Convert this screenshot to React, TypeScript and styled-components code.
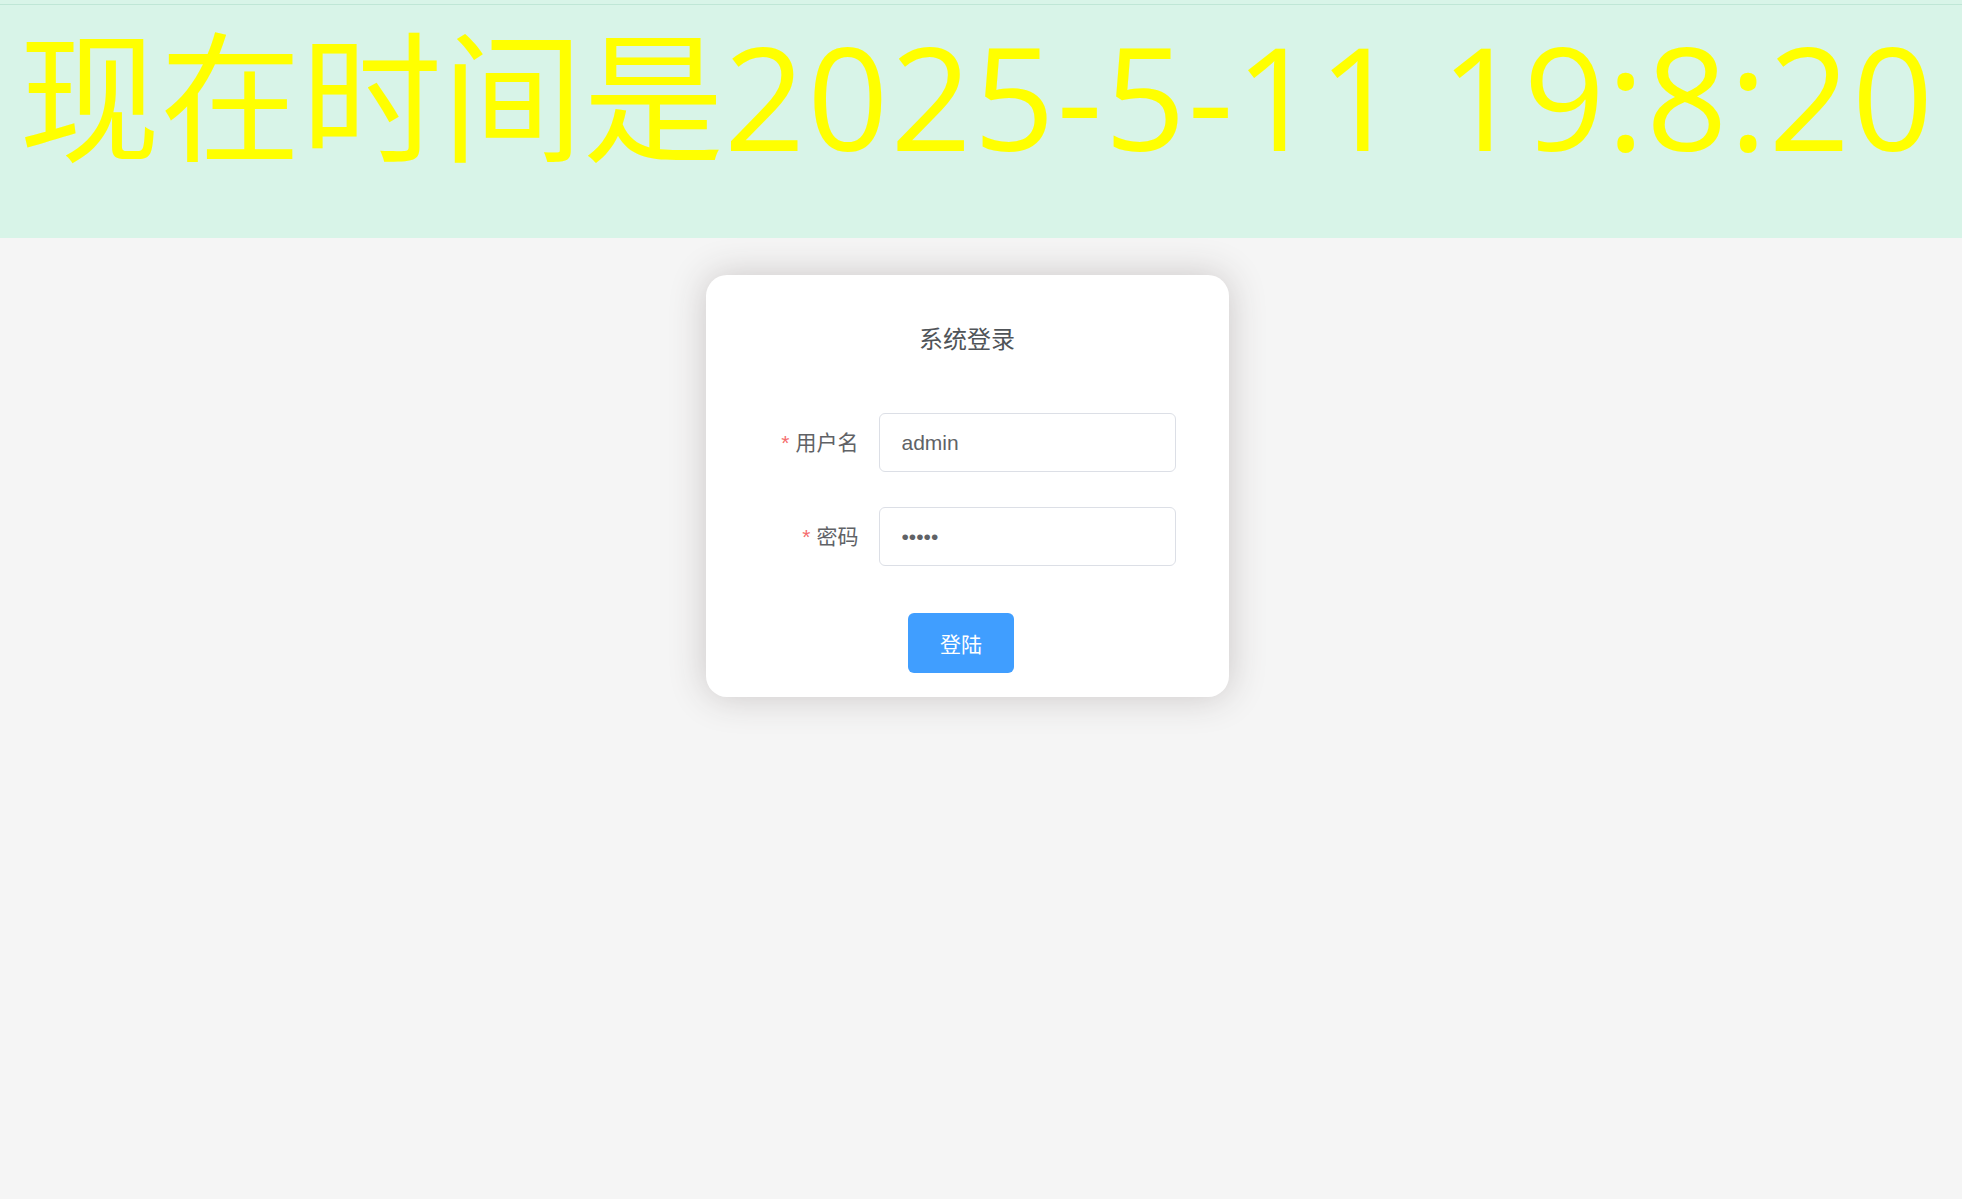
import React from 'react';
import styled, { createGlobalStyle } from 'styled-components';

const App = () => {
  return (
    <>
      <GlobalStyle />
      <Page>
        <Header>
          <TopRule />
          <Clock>
            现在时间是<ClockTime>2025-5-11 19:8:20</ClockTime>
          </Clock>
        </Header>

        <Main>
          <LoginCard>
            <Title>系统登录</Title>

            <FormRow>
              <Label>
                <Required>*</Required>用户名
              </Label>
              <Field type="text" defaultValue="admin" />
            </FormRow>

            <FormRow>
              <Label>
                <Required>*</Required>密码
              </Label>
              <Field type="password" defaultValue="12345" />
            </FormRow>

            <ButtonRow>
              <LoginButton type="button">登陆</LoginButton>
            </ButtonRow>
          </LoginCard>
        </Main>
      </Page>
    </>
  );
};
export default App;

// Style component
const GlobalStyle = createGlobalStyle`
  html, body {
    margin: 0;
    padding: 0;
    background-color: #f5f5f5;
  }

  body {
    font-family: "Liberation Sans", "Noto Sans CJK SC", sans-serif;
  }
`;

const Page = styled.div`
  width: 100%;
  min-height: 1199px;
  background-color: #f5f5f5;
`;

const Header = styled.div`
  height: 238px;
  box-sizing: border-box;
  padding-top: 4px;
  background-color: #d8f4e8;
`;

const TopRule = styled.div`
  height: 1px;
  background-color: #bfe6d6;
`;

const Clock = styled.div`
  padding-top: 2px;
  padding-left: 19px;

  font-family: "Noto Sans CJK SC", sans-serif;
  font-size: 141px;
  line-height: 166px;
  color: #ffff00;
  white-space: nowrap;
`;

const ClockTime = styled.span`
  font-family: "Open Sans", "Noto Sans CJK SC", sans-serif;
  font-size: 142px;
  letter-spacing: 2px;
`;

const Main = styled.div`
  display: flex;
  justify-content: center;

  padding-top: 37px;
  padding-right: 28px;
`;

const LoginCard = styled.div`
  width: 523px;
  box-sizing: border-box;

  padding: 47px 53px 24px 53px;

  background-color: #ffffff;
  border-radius: 21px;
  box-shadow: 0 0 37px #cac6c6;
`;

const Title = styled.h3`
  margin: 0 0 55px 0;

  font-size: 24px;
  line-height: 36px;
  font-weight: normal;
  text-align: center;
  color: #505458;
`;

const FormRow = styled.div`
  display: flex;
  align-items: center;

  margin-bottom: 35px;
`;

const Label = styled.label`
  width: 120px;
  flex-shrink: 0;
  box-sizing: border-box;

  padding-right: 20px;

  font-size: 21px;
  line-height: 24px;
  text-align: right;
  color: #606266;
`;

const Required = styled.span`
  margin-right: 6px;
  color: #f56c6c;
`;

const Field = styled.input`
  flex: 1;
  min-width: 0;
  height: 59px;
  box-sizing: border-box;

  padding: 0 22px;

  border: 1px solid #dcdfe6;
  border-radius: 6px;
  outline: none;

  font-family: "Liberation Sans", "Noto Sans CJK SC", sans-serif;
  font-size: 21px;
  color: #606266;
  background-color: #ffffff;
`;

const ButtonRow = styled.div`
  display: flex;
  justify-content: center;

  margin-top: 47px;
  margin-right: 12px;
`;

const LoginButton = styled.button`
  width: 106px;
  height: 60px;

  border: none;
  border-radius: 6px;

  font-family: "Liberation Sans", "Noto Sans CJK SC", sans-serif;
  font-size: 21px;
  color: #ffffff;
  background-color: #409eff;
  cursor: pointer;
`;
